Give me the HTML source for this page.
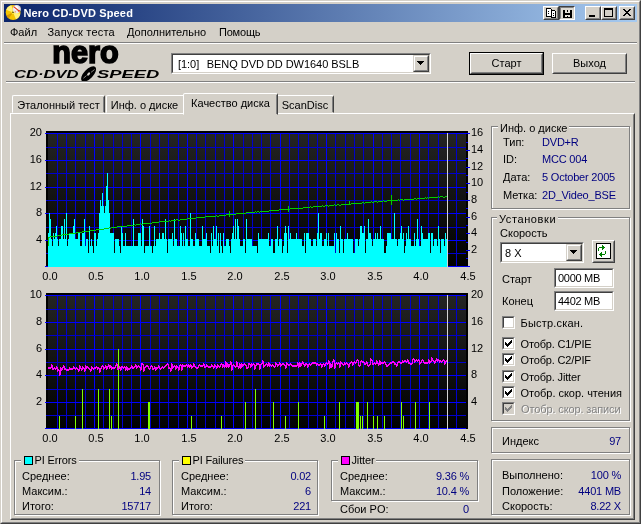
<!DOCTYPE html><html><head><meta charset="utf-8"><title>Nero CD-DVD Speed</title><style>
*{box-sizing:border-box;margin:0;padding:0}
html,body{width:641px;height:524px;overflow:hidden;background:#d4d0c8}
body{position:relative;font-family:"Liberation Sans",sans-serif;font-size:11px;color:#000;line-height:13px}
#w{position:absolute;left:0;top:0;width:641px;height:524px;will-change:transform}
.a{position:absolute;white-space:nowrap}
svg text{font-family:"Liberation Sans",sans-serif}
.frame{left:0;top:0;width:641px;height:524px;border:1px solid;border-color:#d4d0c8 #404040 #404040 #d4d0c8}
.frame2{left:1px;top:1px;width:639px;height:522px;border:1px solid;border-color:#fff #808080 #808080 #fff}
.title{left:4px;top:4px;width:633px;height:18px;background:linear-gradient(90deg,#0a246a,#a6caf0)}
.ttext{left:23.5px;top:6px;color:#fff;font-weight:bold;font-size:11px;line-height:14px;letter-spacing:0.15px}
.menu{top:26px;line-height:13px}
.sep{height:2px;border-top:1px solid #808080;border-bottom:1px solid #fff}
.btn{border:1px solid;border-color:#fff #404040 #404040 #fff;text-align:center}
.btn:after{content:"";position:absolute;left:0;top:0;right:0;bottom:0;border:1px solid;border-color:#d4d0c8 #808080 #808080 #d4d0c8}
.btn2{border:1px solid;border-color:#d4d0c8 #404040 #404040 #d4d0c8}
.btn2:after{content:"";position:absolute;left:0;top:0;right:0;bottom:0;border:1px solid;border-color:#fff #808080 #808080 #fff}
.sunk{border:1px solid;border-color:#808080 #fff #fff #808080;background:#fff}
.sunk:after{content:"";position:absolute;left:0;top:0;right:0;bottom:0;border:1px solid;border-color:#404040 #d4d0c8 #d4d0c8 #404040;pointer-events:none}
.grp{border:1px solid #808080;box-shadow:1px 1px 0 #fff, inset 1px 1px 0 #fff}
.leg{background:#d4d0c8;padding:0 2px}
.v{color:#000080;letter-spacing:-0.2px}
.r{text-align:right}
.tab{border:1px solid;border-color:#fff #404040 transparent #fff;border-radius:2px 2px 0 0}
.tab:after{content:"";position:absolute;right:0;top:1px;bottom:0;width:1px;background:#808080}
.cb{width:13px;height:13px}
</style></head><body><div id="w">
<div class="a frame" style=""></div>
<div class="a frame2" style=""></div>
<div class="a title" style=""></div>
<svg class="a" style="left:5px;top:4px" width="17" height="17" viewBox="5 4 17 17"><circle cx="13.1" cy="12.5" r="7.4" fill="#f4c400"/><path d="M13.1 12.5 L6.2 9.8 A7.4 7.4 0 0 1 11.5 5.3 Z" fill="#fff27a"/><path d="M13.1 12.5 L20.4 13.5 A7.4 7.4 0 0 1 16 19.3 Z" fill="#fff27a"/><path d="M13.1 12.5 L6.3 15.4 A7.4 7.4 0 0 0 8.6 18.4 Z" fill="#d89a00"/><circle cx="13" cy="12.4" r="1.5" fill="#f8e840"/><circle cx="13" cy="12.3" r="0.8" fill="#403000"/><circle cx="16.7" cy="9.1" r="4.2" fill="#e8e8ec"/><circle cx="16" cy="8" r="2" fill="#fff"/><path d="M13.6 6.6 L19.4 11.2" stroke="#e03818" stroke-width="1.1"/><circle cx="19" cy="10.8" r="0.9" fill="#e83010"/><path d="M15.3 11.2v1.2M19.3 6.8l0.6 0.6" stroke="#f07030" stroke-width="0.8"/></svg>
<div class="a ttext" style="">Nero CD-DVD Speed</div>
<div class="a btn" style="left:585px;top:6px;width:16px;height:14px;background:#d4d0c8"><div class="a" style="left:3px;top:8px;width:6px;height:2px;background:#000"></div></div>
<div class="a btn" style="left:601px;top:6px;width:16px;height:14px;background:#d4d0c8"><div class="a" style="left:2px;top:1px;width:9px;height:9px;border:1px solid #000;border-top-width:2px"></div></div>
<div class="a btn" style="left:619px;top:6px;width:16px;height:14px;background:#d4d0c8"><svg class="a" style="left:3px;top:2px" width="8" height="7" viewBox="0 0 8 7" shape-rendering="crispEdges"><path d="M0 0h2v1h1v1h2v-1h1v-1h2v1h-1v1h-1v1h-1v1h1v1h1v1h1v1h-2v-1h-1v-1h-2v1h-1v1h-2v-1h1v-1h1v-1h1v-1h-1v-1h-1v-1h-1z" fill="#000"/></svg></div>
<div class="a btn" style="left:543px;top:6px;width:16px;height:14px;background:#d4d0c8"><svg class="a" style="left:2px;top:1px" width="11" height="10" viewBox="0 0 11 10" shape-rendering="crispEdges"><path d="M0.5 0.5h4l1 1v6.5h-5z" fill="#fff" stroke="#000"/><path d="M5.5 2.5h3l1 1v6h-4z" fill="#fff" stroke="#000"/><path d="M2 3h1v1h-1zM2 5h1v1h-1zM7 5h1v1h-1zM7 7h1v1h-1z" fill="#000"/></svg></div>
<div class="a " style="left:559px;top:6px;width:16px;height:14px;background:#dedbd4;border:1px solid;border-color:#404040 #fff #fff #404040"><div class="a" style="left:0;top:0;right:0;bottom:0;border:1px solid;border-color:#808080 #d4d0c8 #d4d0c8 #808080"></div><svg class="a" style="left:3px;top:3px" width="9" height="8" viewBox="0 0 9 8" shape-rendering="crispEdges"><rect width="9" height="8" fill="#000"/><rect x="2" y="0" width="5" height="3" fill="#e8e4dc"/><rect x="4" y="0" width="1" height="2" fill="#000"/><rect x="2" y="5" width="5" height="3" fill="#e8e4dc"/><rect x="4" y="6" width="1" height="1" fill="#000"/><rect x="2" y="7" width="5" height="1" fill="#000"/></svg></div>
<div class="a menu" style="left:10px;letter-spacing:0px">Файл</div>
<div class="a menu" style="left:47.5px;letter-spacing:0.2px">Запуск теста</div>
<div class="a menu" style="left:127px;letter-spacing:0px">Дополнительно</div>
<div class="a menu" style="left:219px;letter-spacing:-0.2px">Помощь</div>
<div class="a sep" style="left:4px;top:42px;width:633px"></div>
<svg class="a" style="left:0;top:43px" width="170" height="40" viewBox="0 43 170 40"><text x="52.3" y="63" font-size="30.5" font-weight="bold" textLength="66.4" lengthAdjust="spacingAndGlyphs" stroke="#000" stroke-width="1.6" fill="#000">nero</text><text x="14" y="78" font-size="11.5" font-weight="bold" font-style="italic" textLength="64.5" lengthAdjust="spacingAndGlyphs">CD·DVD</text><text x="97" y="78" font-size="11.5" font-weight="bold" font-style="italic" textLength="62.3" lengthAdjust="spacingAndGlyphs">SPEED</text><g transform="rotate(-46 88.6 74)"><ellipse cx="88.6" cy="74" rx="9.6" ry="4.6" fill="#000"/><ellipse cx="88.6" cy="74" rx="1.9" ry="1.1" fill="#d4d0c8"/><path d="M82 73.2 L86 73.6 M91.5 74.6 L96 75.2" stroke="#b8b4ac" stroke-width="0.7"/></g></svg>
<div class="a sunk" style="left:171px;top:53px;width:260px;height:21px"><div class="a" style="left:6px;top:4px;letter-spacing:-0.04px">[1:0]<span style="display:inline-block;width:7.5px"></span>BENQ DVD DD DW1640 BSLB</div><div class="a btn2" style="right:1px;top:1px;width:16px;height:17px;background:#d4d0c8"><svg class="a" style="left:3px;top:5px" width="7" height="4" viewBox="0 0 7 4" shape-rendering="crispEdges"><path d="M0 0h7v1h-1v1h-1v1h-1v1h-1v-1h-1v-1h-1v-1h-1z" fill="#000"/></svg></div></div>
<div class="a " style="left:469px;top:52px;width:75px;height:23px;border:1px solid #000"><div class="a btn" style="left:0;top:0;width:73px;height:21px;line-height:19px">Старт</div></div>
<div class="a btn" style="left:552px;top:53px;width:75px;height:21px;line-height:19px">Выход</div>
<div class="a sep" style="left:6px;top:81px;width:629px"></div>
<div class="a " style="left:10px;top:113px;width:625px;height:407px;border:1px solid;border-color:#fff #404040 #404040 #fff"><div class="a" style="left:0;top:0;right:0;bottom:0;border:1px solid;border-color:#d4d0c8 #808080 #808080 #d4d0c8"></div></div>
<div class="a tab" style="left:12px;top:95px;width:93px;height:18px;text-align:center;line-height:19px;padding-right:0px">Эталонный тест</div>
<div class="a tab" style="left:106px;top:95px;width:79px;height:18px;text-align:center;line-height:19px;padding-right:2px">Инф. о диске</div>
<div class="a tab" style="left:276px;top:95px;width:58px;height:18px;text-align:center;line-height:19px;padding-right:0px">ScanDisc</div>
<div class="a tab" style="left:183px;top:93px;width:95px;height:22px;text-align:center;line-height:19px;background:#d4d0c8">Качество диска</div>
<svg width="641" height="524" viewBox="0 0 641 524" style="position:absolute;left:0;top:0" shape-rendering="crispEdges">
<defs><linearGradient id="pg" x1="0" y1="0" x2="0" y2="1"><stop offset="0" stop-color="#242424"/><stop offset="1" stop-color="#000"/></linearGradient></defs>
<rect x="46" y="131" width="422" height="136" fill="#000"/>
<rect x="48" y="133" width="418" height="134" fill="url(#pg)"/>
<rect x="57" y="133" width="1" height="134" fill="#0000cc"/>
<rect x="66" y="133" width="1" height="134" fill="#0000cc"/>
<rect x="75" y="133" width="1" height="134" fill="#0000cc"/>
<rect x="85" y="133" width="1" height="134" fill="#0000cc"/>
<rect x="94" y="133" width="1" height="134" fill="#0000ff"/>
<rect x="103" y="133" width="1" height="134" fill="#0000cc"/>
<rect x="113" y="133" width="1" height="134" fill="#0000cc"/>
<rect x="122" y="133" width="1" height="134" fill="#0000cc"/>
<rect x="131" y="133" width="1" height="134" fill="#0000cc"/>
<rect x="140" y="133" width="1" height="134" fill="#0000ff"/>
<rect x="150" y="133" width="1" height="134" fill="#0000cc"/>
<rect x="159" y="133" width="1" height="134" fill="#0000cc"/>
<rect x="168" y="133" width="1" height="134" fill="#0000cc"/>
<rect x="178" y="133" width="1" height="134" fill="#0000cc"/>
<rect x="187" y="133" width="1" height="134" fill="#0000ff"/>
<rect x="196" y="133" width="1" height="134" fill="#0000cc"/>
<rect x="205" y="133" width="1" height="134" fill="#0000cc"/>
<rect x="215" y="133" width="1" height="134" fill="#0000cc"/>
<rect x="224" y="133" width="1" height="134" fill="#0000cc"/>
<rect x="233" y="133" width="1" height="134" fill="#0000ff"/>
<rect x="243" y="133" width="1" height="134" fill="#0000cc"/>
<rect x="252" y="133" width="1" height="134" fill="#0000cc"/>
<rect x="261" y="133" width="1" height="134" fill="#0000cc"/>
<rect x="270" y="133" width="1" height="134" fill="#0000cc"/>
<rect x="280" y="133" width="1" height="134" fill="#0000ff"/>
<rect x="289" y="133" width="1" height="134" fill="#0000cc"/>
<rect x="298" y="133" width="1" height="134" fill="#0000cc"/>
<rect x="308" y="133" width="1" height="134" fill="#0000cc"/>
<rect x="317" y="133" width="1" height="134" fill="#0000cc"/>
<rect x="326" y="133" width="1" height="134" fill="#0000ff"/>
<rect x="335" y="133" width="1" height="134" fill="#0000cc"/>
<rect x="345" y="133" width="1" height="134" fill="#0000cc"/>
<rect x="354" y="133" width="1" height="134" fill="#0000cc"/>
<rect x="363" y="133" width="1" height="134" fill="#0000cc"/>
<rect x="373" y="133" width="1" height="134" fill="#0000ff"/>
<rect x="382" y="133" width="1" height="134" fill="#0000cc"/>
<rect x="391" y="133" width="1" height="134" fill="#0000cc"/>
<rect x="400" y="133" width="1" height="134" fill="#0000cc"/>
<rect x="410" y="133" width="1" height="134" fill="#0000cc"/>
<rect x="419" y="133" width="1" height="134" fill="#0000ff"/>
<rect x="428" y="133" width="1" height="134" fill="#0000cc"/>
<rect x="438" y="133" width="1" height="134" fill="#0000cc"/>
<rect x="447" y="133" width="1" height="134" fill="#0000cc"/>
<rect x="456" y="133" width="1" height="134" fill="#0000cc"/>
<rect x="45" y="133" width="421" height="1" fill="#0000ff"/>
<rect x="46" y="147" width="420" height="1" fill="#0000cc"/>
<rect x="45" y="160" width="421" height="1" fill="#0000ff"/>
<rect x="46" y="173" width="420" height="1" fill="#0000cc"/>
<rect x="45" y="187" width="421" height="1" fill="#0000ff"/>
<rect x="46" y="200" width="420" height="1" fill="#0000cc"/>
<rect x="45" y="213" width="421" height="1" fill="#0000ff"/>
<rect x="46" y="227" width="420" height="1" fill="#0000cc"/>
<rect x="45" y="240" width="421" height="1" fill="#0000ff"/>
<rect x="46" y="253" width="420" height="1" fill="#0000cc"/>
<rect x="45" y="266" width="421" height="1" fill="#0000ff"/>
<path d="M48,267V233h1V213h1V219h1V239h1V246h1V233h1V239h1V233h1V226h1V239h1V246h1V239h1V239h1V226h1V226h1V239h1V219h1V239h1V213h1V246h1V239h1V233h1V233h1V233h1V233h1V226h1V219h1V239h1V239h1V239h1V233h1V233h1V246h1V246h1V233h1V233h1V219h1V246h1V239h1V239h1V253h1V226h1V246h1V239h1V246h1V253h1V233h1V233h1V246h1V239h1V233h1V213h1V200h1V206h1V193h1V206h1V213h1V206h1V186h1V173h1V200h1V213h1V233h1V233h1V233h1V233h1V253h1V239h1V239h1V239h1V239h1V246h1V253h1V226h1V233h1V246h1V246h1V233h1V246h1V246h1V246h1V246h1V246h1V246h1V246h1V219h1V246h1V246h1V246h1V246h1V233h1V233h1V233h1V246h1V219h1V226h1V253h1V246h1V246h1V246h1V246h1V226h1V246h1V246h1V253h1V246h1V226h1V246h1V239h1V239h1V239h1V233h1V239h1V239h1V233h1V233h1V239h1V219h1V239h1V253h1V239h1V239h1V239h1V239h1V233h1V246h1V219h1V239h1V239h1V246h1V246h1V246h1V226h1V233h1V246h1V233h1V246h1V226h1V239h1V239h1V246h1V246h1V213h1V239h1V239h1V246h1V246h1V233h1V239h1V239h1V239h1V246h1V246h1V246h1V226h1V239h1V239h1V239h1V233h1V246h1V246h1V246h1V253h1V233h1V246h1V226h1V239h1V239h1V226h1V246h1V233h1V253h1V233h1V246h1V253h1V233h1V246h1V246h1V239h1V239h1V239h1V246h1V253h1V239h1V233h1V226h1V239h1V219h1V239h1V219h1V226h1V239h1V246h1V246h1V246h1V239h1V239h1V253h1V219h1V239h1V239h1V239h1V239h1V239h1V246h1V246h1V246h1V246h1V246h1V253h1V233h1V239h1V239h1V239h1V239h1V239h1V239h1V239h1V239h1V239h1V233h1V246h1V246h1V239h1V239h1V253h1V253h1V239h1V239h1V226h1V246h1V239h1V239h1V239h1V253h1V246h1V233h1V226h1V233h1V253h1V226h1V239h1V233h1V239h1V239h1V239h1V239h1V239h1V233h1V239h1V239h1V239h1V239h1V239h1V246h1V246h1V233h1V253h1V233h1V233h1V233h1V239h1V239h1V246h1V246h1V239h1V239h1V239h1V246h1V233h1V213h1V239h1V233h1V233h1V246h1V246h1V239h1V239h1V233h1V246h1V233h1V246h1V246h1V246h1V246h1V246h1V233h1V253h1V233h1V239h1V239h1V253h1V226h1V239h1V239h1V253h1V239h1V239h1V239h1V233h1V239h1V239h1V239h1V239h1V239h1V253h1V253h1V239h1V239h1V239h1V246h1V239h1V226h1V226h1V233h1V233h1V226h1V253h1V239h1V239h1V219h1V233h1V233h1V239h1V246h1V239h1V239h1V233h1V239h1V233h1V239h1V239h1V226h1V239h1V239h1V239h1V253h1V253h1V246h1V233h1V233h1V233h1V233h1V239h1V239h1V239h1V213h1V239h1V239h1V246h1V239h1V239h1V233h1V226h1V239h1V233h1V253h1V246h1V233h1V239h1V226h1V239h1V239h1V246h1V246h1V246h1V233h1V246h1V239h1V219h1V239h1V246h1V246h1V226h1V233h1V239h1V239h1V239h1V239h1V239h1V233h1V233h1V253h1V233h1V233h1V246h1V239h1V239h1V239h1V246h1V226h1V239h1V253h1V239h1V239h1V239h1V246h1V233h1V239h1V267Z" fill="#00ffff"/>
<path d="M49,237h1v1h-1zM50,236h1v1h-1zM51,236h1v1h-1zM52,236h1v1h-1zM53,236h1v1h-1zM54,236h1v1h-1zM55,236h1v1h-1zM56,236h1v1h-1zM57,235h1v1h-1zM58,235h1v1h-1zM59,235h1v1h-1zM60,235h1v1h-1zM61,235h1v1h-1zM62,234h1v1h-1zM63,234h1v1h-1zM64,234h1v1h-1zM65,234h1v1h-1zM66,234h1v1h-1zM67,234h1v1h-1zM68,234h1v1h-1zM69,233h1v1h-1zM70,233h1v1h-1zM71,233h1v1h-1zM72,233h1v1h-1zM73,233h1v1h-1zM74,233h1v1h-1zM75,233h1v1h-1zM76,232h1v1h-1zM77,232h1v1h-1zM78,232h1v1h-1zM79,232h1v1h-1zM80,232h1v1h-1zM81,232h1v1h-1zM82,231h1v1h-1zM83,231h1v1h-1zM84,231h1v1h-1zM85,231h1v1h-1zM86,231h1v1h-1zM87,231h1v1h-1zM88,231h1v1h-1zM89,230h1v1h-1zM90,230h1v1h-1zM91,230h1v1h-1zM92,230h1v1h-1zM93,230h1v1h-1zM94,230h1v1h-1zM95,230h1v1h-1zM96,229h1v1h-1zM97,229h1v1h-1zM98,229h1v1h-1zM99,229h1v1h-1zM100,229h1v1h-1zM101,229h1v1h-1zM102,229h1v1h-1zM103,229h1v1h-1zM104,228h1v1h-1zM105,228h1v1h-1zM106,228h1v1h-1zM107,228h1v1h-1zM108,228h1v1h-1zM109,227h1v1h-1zM110,228h1v1h-1zM111,227h1v1h-1zM112,227h1v1h-1zM113,227h1v1h-1zM114,227h1v1h-1zM115,227h1v1h-1zM116,227h1v1h-1zM117,226h1v1h-1zM118,226h1v1h-1zM119,226h1v1h-1zM120,226h1v1h-1zM121,226h1v1h-1zM122,226h1v1h-1zM123,226h1v1h-1zM124,226h1v1h-1zM125,226h1v1h-1zM126,226h1v1h-1zM127,225h1v1h-1zM128,225h1v1h-1zM129,225h1v1h-1zM130,225h1v1h-1zM131,225h1v1h-1zM132,225h1v1h-1zM133,225h1v1h-1zM134,224h1v1h-1zM135,225h1v1h-1zM136,224h1v1h-1zM137,224h1v1h-1zM138,224h1v1h-1zM139,224h1v1h-1zM140,223h1v1h-1zM141,224h1v1h-1zM142,224h1v1h-1zM143,223h1v1h-1zM144,223h1v1h-1zM145,223h1v1h-1zM146,223h1v1h-1zM147,223h1v1h-1zM148,223h1v1h-1zM149,223h1v1h-1zM150,223h1v1h-1zM151,223h1v1h-1zM152,222h1v1h-1zM153,222h1v1h-1zM154,222h1v1h-1zM155,222h1v1h-1zM156,222h1v1h-1zM157,222h1v1h-1zM158,222h1v1h-1zM159,221h1v1h-1zM160,221h1v1h-1zM161,221h1v1h-1zM162,221h1v1h-1zM163,221h1v1h-1zM164,221h1v1h-1zM165,221h1v1h-1zM166,221h1v1h-1zM167,221h1v1h-1zM168,221h1v1h-1zM169,220h1v1h-1zM170,221h1v1h-1zM171,220h1v1h-1zM172,220h1v1h-1zM173,220h1v1h-1zM174,220h1v1h-1zM175,220h1v1h-1zM176,219h1v1h-1zM177,219h1v1h-1zM178,220h1v1h-1zM179,220h1v1h-1zM180,219h1v1h-1zM181,219h1v1h-1zM182,219h1v1h-1zM183,219h1v1h-1zM184,219h1v1h-1zM185,219h1v1h-1zM186,219h1v1h-1zM187,218h1v1h-1zM188,218h1v1h-1zM189,218h1v1h-1zM190,218h1v1h-1zM191,218h1v1h-1zM192,218h1v1h-1zM193,218h1v1h-1zM194,218h1v1h-1zM195,218h1v1h-1zM196,217h1v1h-1zM197,217h1v1h-1zM198,217h1v1h-1zM199,217h1v1h-1zM200,217h1v1h-1zM201,217h1v1h-1zM202,217h1v1h-1zM203,217h1v1h-1zM204,217h1v1h-1zM205,216h1v1h-1zM206,216h1v1h-1zM207,216h1v1h-1zM208,216h1v1h-1zM209,216h1v1h-1zM210,216h1v1h-1zM211,216h1v1h-1zM212,216h1v1h-1zM213,216h1v1h-1zM214,216h1v1h-1zM215,216h1v1h-1zM216,215h1v1h-1zM217,216h1v1h-1zM218,216h1v1h-1zM219,215h1v1h-1zM220,215h1v1h-1zM221,215h1v1h-1zM222,215h1v1h-1zM223,215h1v1h-1zM224,215h1v1h-1zM225,215h1v1h-1zM226,214h1v1h-1zM227,214h1v1h-1zM228,214h1v1h-1zM229,214h1v1h-1zM230,214h1v1h-1zM231,214h1v1h-1zM232,214h1v1h-1zM233,214h1v1h-1zM234,214h1v1h-1zM235,214h1v1h-1zM236,213h1v1h-1zM237,213h1v1h-1zM238,213h1v1h-1zM239,213h1v1h-1zM240,213h1v1h-1zM241,213h1v1h-1zM242,213h1v1h-1zM243,213h1v1h-1zM244,213h1v1h-1zM245,213h1v1h-1zM246,212h1v1h-1zM247,212h1v1h-1zM248,212h1v1h-1zM249,212h1v1h-1zM250,212h1v1h-1zM251,212h1v1h-1zM252,212h1v1h-1zM253,212h1v1h-1zM254,212h1v1h-1zM255,211h1v1h-1zM256,212h1v1h-1zM257,211h1v1h-1zM258,211h1v1h-1zM259,212h1v1h-1zM260,211h1v1h-1zM261,211h1v1h-1zM262,211h1v1h-1zM263,211h1v1h-1zM264,211h1v1h-1zM265,211h1v1h-1zM266,211h1v1h-1zM267,211h1v1h-1zM268,211h1v1h-1zM269,210h1v1h-1zM270,210h1v1h-1zM271,210h1v1h-1zM272,210h1v1h-1zM273,210h1v1h-1zM274,210h1v1h-1zM275,210h1v1h-1zM276,210h1v1h-1zM277,210h1v1h-1zM278,210h1v1h-1zM279,209h1v1h-1zM280,209h1v1h-1zM281,209h1v1h-1zM282,209h1v1h-1zM283,209h1v1h-1zM284,209h1v1h-1zM285,209h1v1h-1zM286,209h1v1h-1zM287,209h1v1h-1zM288,208h1v1h-1zM289,209h1v1h-1zM290,208h1v1h-1zM291,208h1v1h-1zM292,208h1v1h-1zM293,208h1v1h-1zM294,208h1v1h-1zM295,208h1v1h-1zM296,208h1v1h-1zM297,208h1v1h-1zM298,208h1v1h-1zM299,208h1v1h-1zM300,208h1v1h-1zM301,208h1v1h-1zM302,208h1v1h-1zM303,207h1v1h-1zM304,207h1v1h-1zM305,207h1v1h-1zM306,207h1v1h-1zM307,207h1v1h-1zM308,207h1v1h-1zM309,207h1v1h-1zM310,206h1v1h-1zM311,207h1v1h-1zM312,207h1v1h-1zM313,206h1v1h-1zM314,206h1v1h-1zM315,206h1v1h-1zM316,206h1v1h-1zM317,206h1v1h-1zM318,206h1v1h-1zM319,206h1v1h-1zM320,206h1v1h-1zM321,206h1v1h-1zM322,205h1v1h-1zM323,206h1v1h-1zM324,206h1v1h-1zM325,205h1v1h-1zM326,205h1v1h-1zM327,205h1v1h-1zM328,206h1v1h-1zM329,205h1v1h-1zM330,205h1v1h-1zM331,205h1v1h-1zM332,205h1v1h-1zM333,205h1v1h-1zM334,204h1v1h-1zM335,205h1v1h-1zM336,205h1v1h-1zM337,204h1v1h-1zM338,204h1v1h-1zM339,205h1v1h-1zM340,205h1v1h-1zM341,204h1v1h-1zM342,204h1v1h-1zM343,204h1v1h-1zM344,204h1v1h-1zM345,204h1v1h-1zM346,204h1v1h-1zM347,204h1v1h-1zM348,204h1v1h-1zM349,203h1v1h-1zM350,204h1v1h-1zM351,203h1v1h-1zM352,203h1v1h-1zM353,203h1v1h-1zM354,203h1v1h-1zM355,203h1v1h-1zM356,203h1v1h-1zM357,203h1v1h-1zM358,203h1v1h-1zM359,203h1v1h-1zM360,203h1v1h-1zM361,203h1v1h-1zM362,202h1v1h-1zM363,202h1v1h-1zM364,203h1v1h-1zM365,202h1v1h-1zM366,202h1v1h-1zM367,202h1v1h-1zM368,202h1v1h-1zM369,202h1v1h-1zM370,202h1v1h-1zM371,201h1v1h-1zM372,202h1v1h-1zM373,202h1v1h-1zM374,201h1v1h-1zM375,201h1v1h-1zM376,201h1v1h-1zM377,202h1v1h-1zM378,201h1v1h-1zM379,201h1v1h-1zM380,201h1v1h-1zM381,201h1v1h-1zM382,201h1v1h-1zM383,200h1v1h-1zM384,201h1v1h-1zM385,201h1v1h-1zM386,201h1v1h-1zM387,200h1v1h-1zM388,200h1v1h-1zM389,200h1v1h-1zM390,200h1v1h-1zM391,200h1v1h-1zM392,200h1v1h-1zM393,200h1v1h-1zM394,200h1v1h-1zM395,200h1v1h-1zM396,200h1v1h-1zM397,200h1v1h-1zM398,199h1v1h-1zM399,200h1v1h-1zM400,199h1v1h-1zM401,199h1v1h-1zM402,199h1v1h-1zM403,200h1v1h-1zM404,199h1v1h-1zM405,199h1v1h-1zM406,199h1v1h-1zM407,199h1v1h-1zM408,199h1v1h-1zM409,199h1v1h-1zM410,199h1v1h-1zM411,199h1v1h-1zM412,199h1v1h-1zM413,199h1v1h-1zM414,198h1v1h-1zM415,198h1v1h-1zM416,199h1v1h-1zM417,198h1v1h-1zM418,198h1v1h-1zM419,198h1v1h-1zM420,198h1v1h-1zM421,198h1v1h-1zM422,198h1v1h-1zM423,198h1v1h-1zM424,198h1v1h-1zM425,197h1v1h-1zM426,198h1v1h-1zM427,197h1v1h-1zM428,198h1v1h-1zM429,197h1v1h-1zM430,197h1v1h-1zM431,197h1v1h-1zM432,197h1v1h-1zM433,197h1v1h-1zM434,197h1v1h-1zM435,197h1v1h-1zM436,197h1v1h-1zM437,197h1v1h-1zM438,196h1v1h-1zM439,197h1v1h-1zM440,196h1v1h-1zM441,196h1v1h-1zM442,196h1v1h-1zM443,197h1v1h-1zM444,197h1v1h-1zM445,196h1v1h-1zM446,196h1v1h-1z" fill="#00d000"/>
<rect x="48" y="237" width="1" height="9" fill="#00d000"/>
<rect x="229" y="211" width="1" height="6" fill="#00d000"/>
<rect x="288" y="206" width="1" height="6" fill="#00d000"/>
<rect x="349" y="201" width="1" height="4" fill="#00d000"/>
<rect x="391" y="195" width="1" height="10" fill="#00d000"/>
<rect x="447" y="133" width="1" height="134" fill="#d4d4d4"/>
<rect x="466" y="133" width="4" height="1" fill="#0000ff"/>
<rect x="466" y="142" width="2" height="1" fill="#0000ff"/>
<rect x="466" y="150" width="4" height="1" fill="#0000ff"/>
<rect x="466" y="158" width="2" height="1" fill="#0000ff"/>
<rect x="466" y="167" width="4" height="1" fill="#0000ff"/>
<rect x="466" y="175" width="2" height="1" fill="#0000ff"/>
<rect x="466" y="183" width="4" height="1" fill="#0000ff"/>
<rect x="466" y="192" width="2" height="1" fill="#0000ff"/>
<rect x="466" y="200" width="4" height="1" fill="#0000ff"/>
<rect x="466" y="208" width="2" height="1" fill="#0000ff"/>
<rect x="466" y="217" width="4" height="1" fill="#0000ff"/>
<rect x="466" y="225" width="2" height="1" fill="#0000ff"/>
<rect x="466" y="233" width="4" height="1" fill="#0000ff"/>
<rect x="466" y="242" width="2" height="1" fill="#0000ff"/>
<rect x="466" y="250" width="4" height="1" fill="#0000ff"/>
<rect x="466" y="258" width="2" height="1" fill="#0000ff"/>
<rect x="466" y="266" width="4" height="1" fill="#0000ff"/>
<rect x="46" y="293" width="422" height="136" fill="#000"/>
<rect x="48" y="295" width="418" height="134" fill="url(#pg)"/>
<rect x="57" y="295" width="1" height="134" fill="#0000cc"/>
<rect x="66" y="295" width="1" height="134" fill="#0000cc"/>
<rect x="75" y="295" width="1" height="134" fill="#0000cc"/>
<rect x="85" y="295" width="1" height="134" fill="#0000cc"/>
<rect x="94" y="295" width="1" height="134" fill="#0000ff"/>
<rect x="103" y="295" width="1" height="134" fill="#0000cc"/>
<rect x="113" y="295" width="1" height="134" fill="#0000cc"/>
<rect x="122" y="295" width="1" height="134" fill="#0000cc"/>
<rect x="131" y="295" width="1" height="134" fill="#0000cc"/>
<rect x="140" y="295" width="1" height="134" fill="#0000ff"/>
<rect x="150" y="295" width="1" height="134" fill="#0000cc"/>
<rect x="159" y="295" width="1" height="134" fill="#0000cc"/>
<rect x="168" y="295" width="1" height="134" fill="#0000cc"/>
<rect x="178" y="295" width="1" height="134" fill="#0000cc"/>
<rect x="187" y="295" width="1" height="134" fill="#0000ff"/>
<rect x="196" y="295" width="1" height="134" fill="#0000cc"/>
<rect x="205" y="295" width="1" height="134" fill="#0000cc"/>
<rect x="215" y="295" width="1" height="134" fill="#0000cc"/>
<rect x="224" y="295" width="1" height="134" fill="#0000cc"/>
<rect x="233" y="295" width="1" height="134" fill="#0000ff"/>
<rect x="243" y="295" width="1" height="134" fill="#0000cc"/>
<rect x="252" y="295" width="1" height="134" fill="#0000cc"/>
<rect x="261" y="295" width="1" height="134" fill="#0000cc"/>
<rect x="270" y="295" width="1" height="134" fill="#0000cc"/>
<rect x="280" y="295" width="1" height="134" fill="#0000ff"/>
<rect x="289" y="295" width="1" height="134" fill="#0000cc"/>
<rect x="298" y="295" width="1" height="134" fill="#0000cc"/>
<rect x="308" y="295" width="1" height="134" fill="#0000cc"/>
<rect x="317" y="295" width="1" height="134" fill="#0000cc"/>
<rect x="326" y="295" width="1" height="134" fill="#0000ff"/>
<rect x="335" y="295" width="1" height="134" fill="#0000cc"/>
<rect x="345" y="295" width="1" height="134" fill="#0000cc"/>
<rect x="354" y="295" width="1" height="134" fill="#0000cc"/>
<rect x="363" y="295" width="1" height="134" fill="#0000cc"/>
<rect x="373" y="295" width="1" height="134" fill="#0000ff"/>
<rect x="382" y="295" width="1" height="134" fill="#0000cc"/>
<rect x="391" y="295" width="1" height="134" fill="#0000cc"/>
<rect x="400" y="295" width="1" height="134" fill="#0000cc"/>
<rect x="410" y="295" width="1" height="134" fill="#0000cc"/>
<rect x="419" y="295" width="1" height="134" fill="#0000ff"/>
<rect x="428" y="295" width="1" height="134" fill="#0000cc"/>
<rect x="438" y="295" width="1" height="134" fill="#0000cc"/>
<rect x="447" y="295" width="1" height="134" fill="#0000cc"/>
<rect x="456" y="295" width="1" height="134" fill="#0000cc"/>
<rect x="45" y="295" width="421" height="1" fill="#0000ff"/>
<rect x="46" y="309" width="420" height="1" fill="#0000cc"/>
<rect x="45" y="322" width="421" height="1" fill="#0000ff"/>
<rect x="46" y="335" width="420" height="1" fill="#0000cc"/>
<rect x="45" y="349" width="421" height="1" fill="#0000ff"/>
<rect x="46" y="362" width="420" height="1" fill="#0000cc"/>
<rect x="45" y="375" width="421" height="1" fill="#0000ff"/>
<rect x="46" y="389" width="420" height="1" fill="#0000cc"/>
<rect x="45" y="402" width="421" height="1" fill="#0000ff"/>
<rect x="46" y="415" width="420" height="1" fill="#0000cc"/>
<rect x="45" y="428" width="421" height="1" fill="#0000ff"/>
<rect x="59" y="416" width="1" height="13" fill="#80ff00"/>
<rect x="75" y="416" width="1" height="13" fill="#80ff00"/>
<rect x="82" y="389" width="1" height="40" fill="#80ff00"/>
<rect x="98" y="389" width="1" height="40" fill="#80ff00"/>
<rect x="109" y="389" width="1" height="40" fill="#80ff00"/>
<rect x="111" y="416" width="1" height="13" fill="#80ff00"/>
<rect x="118" y="349" width="1" height="80" fill="#80ff00"/>
<rect x="148" y="402" width="1" height="27" fill="#80ff00"/>
<rect x="149" y="402" width="1" height="27" fill="#80ff00"/>
<rect x="191" y="416" width="1" height="13" fill="#80ff00"/>
<rect x="221" y="416" width="1" height="13" fill="#80ff00"/>
<rect x="245" y="402" width="1" height="27" fill="#80ff00"/>
<rect x="255" y="389" width="1" height="40" fill="#80ff00"/>
<rect x="273" y="402" width="1" height="27" fill="#80ff00"/>
<rect x="285" y="416" width="1" height="13" fill="#80ff00"/>
<rect x="298" y="402" width="1" height="27" fill="#80ff00"/>
<rect x="324" y="416" width="1" height="13" fill="#80ff00"/>
<rect x="339" y="402" width="1" height="27" fill="#80ff00"/>
<rect x="356" y="402" width="1" height="27" fill="#80ff00"/>
<rect x="357" y="402" width="1" height="27" fill="#80ff00"/>
<rect x="358" y="402" width="1" height="27" fill="#80ff00"/>
<rect x="360" y="416" width="1" height="13" fill="#80ff00"/>
<rect x="362" y="416" width="1" height="13" fill="#80ff00"/>
<rect x="367" y="402" width="1" height="27" fill="#80ff00"/>
<rect x="373" y="416" width="1" height="13" fill="#80ff00"/>
<rect x="377" y="416" width="1" height="13" fill="#80ff00"/>
<rect x="384" y="416" width="1" height="13" fill="#80ff00"/>
<rect x="401" y="402" width="1" height="27" fill="#80ff00"/>
<rect x="403" y="416" width="1" height="13" fill="#80ff00"/>
<rect x="415" y="402" width="1" height="27" fill="#80ff00"/>
<rect x="429" y="402" width="1" height="27" fill="#80ff00"/>
<path d="M48,367h1v1h-1zM49,367h1v1h-1zM50,367h1v1h-1zM51,364h1v3h-1zM52,365h1v4h-1zM53,368h1v1h-1zM54,367h1v1h-1zM55,368h1v1h-1zM56,366h1v2h-1zM57,367h1v4h-1zM58,369h1v1h-1zM59,370h1v5h-1zM60,367h1v7h-1zM61,368h1v2h-1zM62,367h1v2h-1zM63,365h1v2h-1zM64,366h1v3h-1zM65,368h1v1h-1zM66,369h1v1h-1zM67,369h1v1h-1zM68,369h1v1h-1zM69,367h1v2h-1zM70,368h1v1h-1zM71,368h1v1h-1zM72,368h1v1h-1zM73,366h1v2h-1zM74,367h1v1h-1zM75,368h1v1h-1zM76,367h1v1h-1zM77,368h1v1h-1zM78,369h1v2h-1zM79,365h1v5h-1zM80,366h1v2h-1zM81,368h1v2h-1zM82,366h1v3h-1zM83,367h1v1h-1zM84,368h1v3h-1zM85,365h1v5h-1zM86,366h1v2h-1zM87,366h1v1h-1zM88,367h1v1h-1zM89,368h1v1h-1zM90,369h1v2h-1zM91,366h1v4h-1zM92,367h1v1h-1zM93,368h1v1h-1zM94,367h1v1h-1zM95,367h1v1h-1zM96,366h1v1h-1zM97,367h1v2h-1zM98,367h1v1h-1zM99,368h1v4h-1zM100,368h1v3h-1zM101,366h1v2h-1zM102,365h1v1h-1zM103,366h1v3h-1zM104,367h1v1h-1zM105,365h1v2h-1zM106,366h1v3h-1zM107,366h1v2h-1zM108,364h1v2h-1zM109,365h1v3h-1zM110,365h1v2h-1zM111,366h1v3h-1zM112,367h1v1h-1zM113,367h1v1h-1zM114,367h1v1h-1zM115,365h1v2h-1zM116,363h1v2h-1zM117,364h1v5h-1zM118,368h1v1h-1zM119,366h1v2h-1zM120,367h1v3h-1zM121,366h1v3h-1zM122,366h1v1h-1zM123,367h1v1h-1zM124,366h1v1h-1zM125,367h1v3h-1zM126,366h1v3h-1zM127,367h1v3h-1zM128,368h1v1h-1zM129,368h1v1h-1zM130,367h1v1h-1zM131,365h1v2h-1zM132,366h1v2h-1zM133,367h1v1h-1zM134,366h1v1h-1zM135,364h1v2h-1zM136,365h1v3h-1zM137,366h1v1h-1zM138,365h1v1h-1zM139,366h1v1h-1zM140,367h1v3h-1zM141,363h1v6h-1zM142,363h1v1h-1zM143,364h1v7h-1zM144,367h1v3h-1zM145,366h1v1h-1zM146,365h1v1h-1zM147,365h1v1h-1zM148,366h1v2h-1zM149,368h1v1h-1zM150,366h1v2h-1zM151,365h1v1h-1zM152,366h1v3h-1zM153,368h1v1h-1zM154,366h1v2h-1zM155,367h1v3h-1zM156,367h1v2h-1zM157,367h1v1h-1zM158,365h1v2h-1zM159,366h1v2h-1zM160,368h1v1h-1zM161,367h1v1h-1zM162,366h1v1h-1zM163,367h1v1h-1zM164,366h1v1h-1zM165,365h1v1h-1zM166,364h1v1h-1zM167,363h1v1h-1zM168,364h1v4h-1zM169,367h1v1h-1zM170,368h1v3h-1zM171,363h1v7h-1zM172,364h1v4h-1zM173,366h1v1h-1zM174,365h1v1h-1zM175,366h1v3h-1zM176,365h1v3h-1zM177,366h1v1h-1zM178,367h1v3h-1zM179,365h1v4h-1zM180,364h1v1h-1zM181,365h1v5h-1zM182,364h1v5h-1zM183,365h1v1h-1zM184,365h1v1h-1zM185,365h1v1h-1zM186,364h1v1h-1zM187,365h1v2h-1zM188,364h1v2h-1zM189,365h1v2h-1zM190,364h1v2h-1zM191,365h1v3h-1zM192,366h1v1h-1zM193,363h1v3h-1zM194,364h1v2h-1zM195,366h1v1h-1zM196,367h1v1h-1zM197,367h1v1h-1zM198,365h1v2h-1zM199,364h1v1h-1zM200,365h1v1h-1zM201,365h1v1h-1zM202,365h1v1h-1zM203,363h1v2h-1zM204,364h1v3h-1zM205,366h1v1h-1zM206,364h1v2h-1zM207,365h1v1h-1zM208,366h1v1h-1zM209,366h1v1h-1zM210,366h1v1h-1zM211,364h1v2h-1zM212,365h1v1h-1zM213,366h1v2h-1zM214,364h1v3h-1zM215,365h1v1h-1zM216,366h1v2h-1zM217,364h1v3h-1zM218,365h1v1h-1zM219,366h1v1h-1zM220,364h1v2h-1zM221,363h1v1h-1zM222,364h1v3h-1zM223,364h1v2h-1zM224,365h1v2h-1zM225,361h1v5h-1zM226,362h1v5h-1zM227,363h1v3h-1zM228,364h1v3h-1zM229,364h1v2h-1zM230,361h1v3h-1zM231,362h1v8h-1zM232,365h1v4h-1zM233,364h1v1h-1zM234,365h1v1h-1zM235,366h1v1h-1zM236,361h1v5h-1zM237,362h1v4h-1zM238,366h1v2h-1zM239,363h1v4h-1zM240,364h1v4h-1zM241,363h1v4h-1zM242,364h1v2h-1zM243,364h1v1h-1zM244,363h1v1h-1zM245,364h1v1h-1zM246,365h1v3h-1zM247,367h1v1h-1zM248,363h1v4h-1zM249,363h1v1h-1zM250,364h1v3h-1zM251,363h1v3h-1zM252,364h1v1h-1zM253,363h1v1h-1zM254,364h1v5h-1zM255,365h1v3h-1zM256,363h1v2h-1zM257,363h1v1h-1zM258,363h1v1h-1zM259,364h1v5h-1zM260,364h1v4h-1zM261,363h1v1h-1zM262,360h1v3h-1zM263,361h1v6h-1zM264,365h1v1h-1zM265,364h1v1h-1zM266,363h1v1h-1zM267,364h1v2h-1zM268,362h1v3h-1zM269,363h1v3h-1zM270,364h1v1h-1zM271,365h1v1h-1zM272,364h1v1h-1zM273,365h1v1h-1zM274,366h1v1h-1zM275,362h1v4h-1zM276,363h1v1h-1zM277,364h1v2h-1zM278,364h1v1h-1zM279,362h1v2h-1zM280,363h1v3h-1zM281,364h1v1h-1zM282,363h1v1h-1zM283,363h1v1h-1zM284,364h1v1h-1zM285,365h1v3h-1zM286,362h1v5h-1zM287,363h1v1h-1zM288,364h1v1h-1zM289,364h1v1h-1zM290,363h1v1h-1zM291,364h1v1h-1zM292,365h1v1h-1zM293,365h1v1h-1zM294,365h1v1h-1zM295,365h1v1h-1zM296,365h1v1h-1zM297,362h1v3h-1zM298,363h1v4h-1zM299,362h1v4h-1zM300,363h1v3h-1zM301,363h1v2h-1zM302,361h1v2h-1zM303,362h1v2h-1zM304,364h1v2h-1zM305,363h1v2h-1zM306,363h1v1h-1zM307,364h1v3h-1zM308,364h1v2h-1zM309,363h1v1h-1zM310,364h1v1h-1zM311,363h1v1h-1zM312,362h1v1h-1zM313,362h1v1h-1zM314,362h1v1h-1zM315,362h1v1h-1zM316,363h1v2h-1zM317,363h1v1h-1zM318,364h1v1h-1zM319,364h1v1h-1zM320,363h1v1h-1zM321,364h1v3h-1zM322,364h1v2h-1zM323,363h1v1h-1zM324,364h1v2h-1zM325,363h1v2h-1zM326,362h1v1h-1zM327,363h1v1h-1zM328,360h1v3h-1zM329,361h1v7h-1zM330,363h1v4h-1zM331,364h1v3h-1zM332,361h1v5h-1zM333,359h1v2h-1zM334,360h1v8h-1zM335,363h1v4h-1zM336,362h1v1h-1zM337,363h1v1h-1zM338,362h1v1h-1zM339,363h1v4h-1zM340,361h1v5h-1zM341,362h1v1h-1zM342,363h1v1h-1zM343,364h1v1h-1zM344,362h1v2h-1zM345,363h1v1h-1zM346,362h1v1h-1zM347,363h1v1h-1zM348,364h1v3h-1zM349,363h1v3h-1zM350,362h1v1h-1zM351,361h1v1h-1zM352,362h1v3h-1zM353,362h1v2h-1zM354,361h1v1h-1zM355,362h1v1h-1zM356,360h1v2h-1zM357,359h1v1h-1zM358,360h1v5h-1zM359,365h1v1h-1zM360,361h1v4h-1zM361,360h1v1h-1zM362,361h1v1h-1zM363,361h1v1h-1zM364,362h1v2h-1zM365,363h1v1h-1zM366,361h1v2h-1zM367,362h1v3h-1zM368,365h1v1h-1zM369,364h1v1h-1zM370,358h1v6h-1zM371,359h1v1h-1zM372,360h1v4h-1zM373,363h1v1h-1zM374,362h1v1h-1zM375,363h1v1h-1zM376,360h1v3h-1zM377,361h1v2h-1zM378,363h1v2h-1zM379,360h1v4h-1zM380,361h1v3h-1zM381,362h1v1h-1zM382,362h1v1h-1zM383,362h1v1h-1zM384,361h1v1h-1zM385,362h1v2h-1zM386,364h1v2h-1zM387,365h1v1h-1zM388,364h1v1h-1zM389,363h1v1h-1zM390,362h1v1h-1zM391,362h1v1h-1zM392,361h1v1h-1zM393,361h1v1h-1zM394,362h1v2h-1zM395,363h1v1h-1zM396,364h1v2h-1zM397,362h1v3h-1zM398,361h1v1h-1zM399,361h1v1h-1zM400,362h1v1h-1zM401,362h1v1h-1zM402,360h1v2h-1zM403,361h1v1h-1zM404,360h1v1h-1zM405,360h1v1h-1zM406,361h1v1h-1zM407,359h1v2h-1zM408,360h1v3h-1zM409,362h1v1h-1zM410,363h1v1h-1zM411,363h1v1h-1zM412,359h1v4h-1zM413,358h1v1h-1zM414,359h1v3h-1zM415,360h1v1h-1zM416,359h1v1h-1zM417,360h1v1h-1zM418,359h1v1h-1zM419,360h1v4h-1zM420,362h1v1h-1zM421,360h1v2h-1zM422,359h1v1h-1zM423,360h1v2h-1zM424,362h1v1h-1zM425,362h1v1h-1zM426,362h1v1h-1zM427,362h1v1h-1zM428,359h1v3h-1zM429,360h1v3h-1zM430,361h1v1h-1zM431,357h1v4h-1zM432,358h1v2h-1zM433,360h1v1h-1zM434,361h1v2h-1zM435,360h1v2h-1zM436,358h1v2h-1zM437,359h1v2h-1zM438,359h1v1h-1zM439,360h1v2h-1zM440,360h1v1h-1zM441,361h1v1h-1zM442,360h1v1h-1zM443,359h1v1h-1zM444,360h1v4h-1zM445,361h1v2h-1zM446,360h1v1h-1z" fill="#ff00ff"/>
<path d="M48,368h1v1h-1zM49,368h1v1h-1zM50,368h1v1h-1zM51,365h1v3h-1zM52,366h1v4h-1zM53,369h1v1h-1zM54,368h1v1h-1zM55,369h1v1h-1zM56,367h1v2h-1zM57,368h1v4h-1zM58,370h1v1h-1zM59,371h1v5h-1zM60,368h1v7h-1zM61,369h1v2h-1zM62,368h1v2h-1zM63,366h1v2h-1zM64,367h1v3h-1zM65,369h1v1h-1zM66,370h1v1h-1zM67,370h1v1h-1zM68,370h1v1h-1zM69,368h1v2h-1zM70,369h1v1h-1zM71,369h1v1h-1zM72,369h1v1h-1zM73,367h1v2h-1zM74,368h1v1h-1zM75,369h1v1h-1zM76,368h1v1h-1zM77,369h1v1h-1zM78,370h1v2h-1zM79,366h1v5h-1zM80,367h1v2h-1zM81,369h1v2h-1zM82,367h1v3h-1zM83,368h1v1h-1zM84,369h1v3h-1zM85,366h1v5h-1zM86,367h1v2h-1zM87,367h1v1h-1zM88,368h1v1h-1zM89,369h1v1h-1zM90,370h1v2h-1zM91,367h1v4h-1zM92,368h1v1h-1zM93,369h1v1h-1zM94,368h1v1h-1zM95,368h1v1h-1zM96,367h1v1h-1zM97,368h1v2h-1zM98,368h1v1h-1zM99,369h1v4h-1zM100,369h1v3h-1zM101,367h1v2h-1zM102,366h1v1h-1zM103,367h1v3h-1zM104,368h1v1h-1zM105,366h1v2h-1zM106,367h1v3h-1zM107,367h1v2h-1zM108,365h1v2h-1zM109,366h1v3h-1zM110,366h1v2h-1zM111,367h1v3h-1zM112,368h1v1h-1zM113,368h1v1h-1zM114,368h1v1h-1zM115,366h1v2h-1zM116,364h1v2h-1zM117,365h1v5h-1zM118,369h1v1h-1zM119,367h1v2h-1zM120,368h1v3h-1zM121,367h1v3h-1zM122,367h1v1h-1zM123,368h1v1h-1zM124,367h1v1h-1zM125,368h1v3h-1zM126,367h1v3h-1zM127,368h1v3h-1zM128,369h1v1h-1zM129,369h1v1h-1zM130,368h1v1h-1zM131,366h1v2h-1zM132,367h1v2h-1zM133,368h1v1h-1zM134,367h1v1h-1zM135,365h1v2h-1zM136,366h1v3h-1zM137,367h1v1h-1zM138,366h1v1h-1zM139,367h1v1h-1zM140,368h1v3h-1zM141,364h1v6h-1zM142,364h1v1h-1zM143,365h1v7h-1zM144,368h1v3h-1zM145,367h1v1h-1zM146,366h1v1h-1zM147,366h1v1h-1zM148,367h1v2h-1zM149,369h1v1h-1zM150,367h1v2h-1zM151,366h1v1h-1zM152,367h1v3h-1zM153,369h1v1h-1zM154,367h1v2h-1zM155,368h1v3h-1zM156,368h1v2h-1zM157,368h1v1h-1zM158,366h1v2h-1zM159,367h1v2h-1zM160,369h1v1h-1zM161,368h1v1h-1zM162,367h1v1h-1zM163,368h1v1h-1zM164,367h1v1h-1zM165,366h1v1h-1zM166,365h1v1h-1zM167,364h1v1h-1zM168,365h1v4h-1zM169,368h1v1h-1zM170,369h1v3h-1zM171,364h1v7h-1zM172,365h1v4h-1zM173,367h1v1h-1zM174,366h1v1h-1zM175,367h1v3h-1zM176,366h1v3h-1zM177,367h1v1h-1zM178,368h1v3h-1zM179,366h1v4h-1zM180,365h1v1h-1zM181,366h1v5h-1zM182,365h1v5h-1zM183,366h1v1h-1zM184,366h1v1h-1zM185,366h1v1h-1zM186,365h1v1h-1zM187,366h1v2h-1zM188,365h1v2h-1zM189,366h1v2h-1zM190,365h1v2h-1zM191,366h1v3h-1zM192,367h1v1h-1zM193,364h1v3h-1zM194,365h1v2h-1zM195,367h1v1h-1zM196,368h1v1h-1zM197,368h1v1h-1zM198,366h1v2h-1zM199,365h1v1h-1zM200,366h1v1h-1zM201,366h1v1h-1zM202,366h1v1h-1zM203,364h1v2h-1zM204,365h1v3h-1zM205,367h1v1h-1zM206,365h1v2h-1zM207,366h1v1h-1zM208,367h1v1h-1zM209,367h1v1h-1zM210,367h1v1h-1zM211,365h1v2h-1zM212,366h1v1h-1zM213,367h1v2h-1zM214,365h1v3h-1zM215,366h1v1h-1zM216,367h1v2h-1zM217,365h1v3h-1zM218,366h1v1h-1zM219,367h1v1h-1zM220,365h1v2h-1zM221,364h1v1h-1zM222,365h1v3h-1zM223,365h1v2h-1zM224,366h1v2h-1zM225,362h1v5h-1zM226,363h1v5h-1zM227,364h1v3h-1zM228,365h1v3h-1zM229,365h1v2h-1zM230,362h1v3h-1zM231,363h1v8h-1zM232,366h1v4h-1zM233,365h1v1h-1zM234,366h1v1h-1zM235,367h1v1h-1zM236,362h1v5h-1zM237,363h1v4h-1zM238,367h1v2h-1zM239,364h1v4h-1zM240,365h1v4h-1zM241,364h1v4h-1zM242,365h1v2h-1zM243,365h1v1h-1zM244,364h1v1h-1zM245,365h1v1h-1zM246,366h1v3h-1zM247,368h1v1h-1zM248,364h1v4h-1zM249,364h1v1h-1zM250,365h1v3h-1zM251,364h1v3h-1zM252,365h1v1h-1zM253,364h1v1h-1zM254,365h1v5h-1zM255,366h1v3h-1zM256,364h1v2h-1zM257,364h1v1h-1zM258,364h1v1h-1zM259,365h1v5h-1zM260,365h1v4h-1zM261,364h1v1h-1zM262,361h1v3h-1zM263,362h1v6h-1zM264,366h1v1h-1zM265,365h1v1h-1zM266,364h1v1h-1zM267,365h1v2h-1zM268,363h1v3h-1zM269,364h1v3h-1zM270,365h1v1h-1zM271,366h1v1h-1zM272,365h1v1h-1zM273,366h1v1h-1zM274,367h1v1h-1zM275,363h1v4h-1zM276,364h1v1h-1zM277,365h1v2h-1zM278,365h1v1h-1zM279,363h1v2h-1zM280,364h1v3h-1zM281,365h1v1h-1zM282,364h1v1h-1zM283,364h1v1h-1zM284,365h1v1h-1zM285,366h1v3h-1zM286,363h1v5h-1zM287,364h1v1h-1zM288,365h1v1h-1zM289,365h1v1h-1zM290,364h1v1h-1zM291,365h1v1h-1zM292,366h1v1h-1zM293,366h1v1h-1zM294,366h1v1h-1zM295,366h1v1h-1zM296,366h1v1h-1zM297,363h1v3h-1zM298,364h1v4h-1zM299,363h1v4h-1zM300,364h1v3h-1zM301,364h1v2h-1zM302,362h1v2h-1zM303,363h1v2h-1zM304,365h1v2h-1zM305,364h1v2h-1zM306,364h1v1h-1zM307,365h1v3h-1zM308,365h1v2h-1zM309,364h1v1h-1zM310,365h1v1h-1zM311,364h1v1h-1zM312,363h1v1h-1zM313,363h1v1h-1zM314,363h1v1h-1zM315,363h1v1h-1zM316,364h1v2h-1zM317,364h1v1h-1zM318,365h1v1h-1zM319,365h1v1h-1zM320,364h1v1h-1zM321,365h1v3h-1zM322,365h1v2h-1zM323,364h1v1h-1zM324,365h1v2h-1zM325,364h1v2h-1zM326,363h1v1h-1zM327,364h1v1h-1zM328,361h1v3h-1zM329,362h1v7h-1zM330,364h1v4h-1zM331,365h1v3h-1zM332,362h1v5h-1zM333,360h1v2h-1zM334,361h1v8h-1zM335,364h1v4h-1zM336,363h1v1h-1zM337,364h1v1h-1zM338,363h1v1h-1zM339,364h1v4h-1zM340,362h1v5h-1zM341,363h1v1h-1zM342,364h1v1h-1zM343,365h1v1h-1zM344,363h1v2h-1zM345,364h1v1h-1zM346,363h1v1h-1zM347,364h1v1h-1zM348,365h1v3h-1zM349,364h1v3h-1zM350,363h1v1h-1zM351,362h1v1h-1zM352,363h1v3h-1zM353,363h1v2h-1zM354,362h1v1h-1zM355,363h1v1h-1zM356,361h1v2h-1zM357,360h1v1h-1zM358,361h1v5h-1zM359,366h1v1h-1zM360,362h1v4h-1zM361,361h1v1h-1zM362,362h1v1h-1zM363,362h1v1h-1zM364,363h1v2h-1zM365,364h1v1h-1zM366,362h1v2h-1zM367,363h1v3h-1zM368,366h1v1h-1zM369,365h1v1h-1zM370,359h1v6h-1zM371,360h1v1h-1zM372,361h1v4h-1zM373,364h1v1h-1zM374,363h1v1h-1zM375,364h1v1h-1zM376,361h1v3h-1zM377,362h1v2h-1zM378,364h1v2h-1zM379,361h1v4h-1zM380,362h1v3h-1zM381,363h1v1h-1zM382,363h1v1h-1zM383,363h1v1h-1zM384,362h1v1h-1zM385,363h1v2h-1zM386,365h1v2h-1zM387,366h1v1h-1zM388,365h1v1h-1zM389,364h1v1h-1zM390,363h1v1h-1zM391,363h1v1h-1zM392,362h1v1h-1zM393,362h1v1h-1zM394,363h1v2h-1zM395,364h1v1h-1zM396,365h1v2h-1zM397,363h1v3h-1zM398,362h1v1h-1zM399,362h1v1h-1zM400,363h1v1h-1zM401,363h1v1h-1zM402,361h1v2h-1zM403,362h1v1h-1zM404,361h1v1h-1zM405,361h1v1h-1zM406,362h1v1h-1zM407,360h1v2h-1zM408,361h1v3h-1zM409,363h1v1h-1zM410,364h1v1h-1zM411,364h1v1h-1zM412,360h1v4h-1zM413,359h1v1h-1zM414,360h1v3h-1zM415,361h1v1h-1zM416,360h1v1h-1zM417,361h1v1h-1zM418,360h1v1h-1zM419,361h1v4h-1zM420,363h1v1h-1zM421,361h1v2h-1zM422,360h1v1h-1zM423,361h1v2h-1zM424,363h1v1h-1zM425,363h1v1h-1zM426,363h1v1h-1zM427,363h1v1h-1zM428,360h1v3h-1zM429,361h1v3h-1zM430,362h1v1h-1zM431,358h1v4h-1zM432,359h1v2h-1zM433,361h1v1h-1zM434,362h1v2h-1zM435,361h1v2h-1zM436,359h1v2h-1zM437,360h1v2h-1zM438,360h1v1h-1zM439,361h1v2h-1zM440,361h1v1h-1zM441,362h1v1h-1zM442,361h1v1h-1zM443,360h1v1h-1zM444,361h1v4h-1zM445,362h1v2h-1zM446,361h1v1h-1z" fill="#ff00ff"/>
<rect x="447" y="295" width="1" height="134" fill="#d4d4d4"/>
<text x="42" y="136" text-anchor="end" fill="#000" font-size="11">20</text>
<text x="42" y="163" text-anchor="end" fill="#000" font-size="11">16</text>
<text x="42" y="190" text-anchor="end" fill="#000" font-size="11">12</text>
<text x="42" y="216" text-anchor="end" fill="#000" font-size="11">8</text>
<text x="42" y="243" text-anchor="end" fill="#000" font-size="11">4</text>
<text x="471" y="136" text-anchor="start" fill="#000" font-size="11">16</text>
<text x="471" y="153" text-anchor="start" fill="#000" font-size="11">14</text>
<text x="471" y="170" text-anchor="start" fill="#000" font-size="11">12</text>
<text x="471" y="186" text-anchor="start" fill="#000" font-size="11">10</text>
<text x="471" y="203" text-anchor="start" fill="#000" font-size="11">8</text>
<text x="471" y="220" text-anchor="start" fill="#000" font-size="11">6</text>
<text x="471" y="236" text-anchor="start" fill="#000" font-size="11">4</text>
<text x="471" y="253" text-anchor="start" fill="#000" font-size="11">2</text>
<text x="42" y="298" text-anchor="end" fill="#000" font-size="11">10</text>
<text x="42" y="325" text-anchor="end" fill="#000" font-size="11">8</text>
<text x="42" y="352" text-anchor="end" fill="#000" font-size="11">6</text>
<text x="42" y="378" text-anchor="end" fill="#000" font-size="11">4</text>
<text x="42" y="405" text-anchor="end" fill="#000" font-size="11">2</text>
<text x="471" y="298" text-anchor="start" fill="#000" font-size="11">20</text>
<text x="471" y="325" text-anchor="start" fill="#000" font-size="11">16</text>
<text x="471" y="352" text-anchor="start" fill="#000" font-size="11">12</text>
<text x="471" y="378" text-anchor="start" fill="#000" font-size="11">8</text>
<text x="471" y="405" text-anchor="start" fill="#000" font-size="11">4</text>
<text x="50" y="280" text-anchor="middle" fill="#000" font-size="11">0.0</text>
<text x="50" y="442" text-anchor="middle" fill="#000" font-size="11">0.0</text>
<text x="96" y="280" text-anchor="middle" fill="#000" font-size="11">0.5</text>
<text x="96" y="442" text-anchor="middle" fill="#000" font-size="11">0.5</text>
<text x="142" y="280" text-anchor="middle" fill="#000" font-size="11">1.0</text>
<text x="142" y="442" text-anchor="middle" fill="#000" font-size="11">1.0</text>
<text x="189" y="280" text-anchor="middle" fill="#000" font-size="11">1.5</text>
<text x="189" y="442" text-anchor="middle" fill="#000" font-size="11">1.5</text>
<text x="235" y="280" text-anchor="middle" fill="#000" font-size="11">2.0</text>
<text x="235" y="442" text-anchor="middle" fill="#000" font-size="11">2.0</text>
<text x="282" y="280" text-anchor="middle" fill="#000" font-size="11">2.5</text>
<text x="282" y="442" text-anchor="middle" fill="#000" font-size="11">2.5</text>
<text x="328" y="280" text-anchor="middle" fill="#000" font-size="11">3.0</text>
<text x="328" y="442" text-anchor="middle" fill="#000" font-size="11">3.0</text>
<text x="375" y="280" text-anchor="middle" fill="#000" font-size="11">3.5</text>
<text x="375" y="442" text-anchor="middle" fill="#000" font-size="11">3.5</text>
<text x="421" y="280" text-anchor="middle" fill="#000" font-size="11">4.0</text>
<text x="421" y="442" text-anchor="middle" fill="#000" font-size="11">4.0</text>
<text x="468" y="280" text-anchor="middle" fill="#000" font-size="11">4.5</text>
<text x="468" y="442" text-anchor="middle" fill="#000" font-size="11">4.5</text>
</svg>
<div class="a grp" style="left:491px;top:126px;width:139px;height:83px"></div><div class="a leg" style="left:498px;top:122px">Инф. о диске</div>
<div class="a " style="left:503px;top:136px">Тип:</div>
<div class="a v" style="left:542px;top:136px">DVD+R</div>
<div class="a " style="left:503px;top:153px">ID:</div>
<div class="a v" style="left:542px;top:153px">MCC 004</div>
<div class="a " style="left:503px;top:171px">Дата:</div>
<div class="a v" style="left:542px;top:171px">5 October 2005</div>
<div class="a " style="left:503px;top:189px">Метка:</div>
<div class="a v" style="left:542px;top:189px">2D_Video_BSE</div>
<div class="a grp" style="left:491px;top:217px;width:139px;height:204px"></div><div class="a leg" style="left:497px;top:213px"><span style="letter-spacing:0.6px">Установки</span></div>
<div class="a " style="left:500px;top:227px">Скорость</div>
<div class="a sunk" style="left:500px;top:242px;width:84px;height:21px"><div class="a" style="left:4px;top:4px">8 X</div><div class="a btn2" style="right:1px;top:1px;width:16px;height:17px;background:#d4d0c8"><svg class="a" style="left:3px;top:5px" width="7" height="4" viewBox="0 0 7 4" shape-rendering="crispEdges"><path d="M0 0h7v1h-1v1h-1v1h-1v1h-1v-1h-1v-1h-1v-1h-1z" fill="#000"/></svg></div></div>
<div class="a btn" style="left:592px;top:240px;width:23px;height:23px"><div class="a" style="left:3px;top:2px;width:15px;height:16px;background:#fff;border:1px solid #000"></div><svg class="a" style="left:4px;top:3px" width="11" height="14" viewBox="598 244 11 14" shape-rendering="crispEdges"><path d="M599 251v-3h1v-1h3v-2h1v1h1v1h1v1h-1v1h-1v1h-1v-2h-3v3z M607 251v3h-1v1h-3v2h-1v-1h-1v-1h-1v-1h1v-1h1v-1h1v2h3v-3z" fill="#008000"/></svg></div>
<div class="a " style="left:502px;top:273px">Старт</div>
<div class="a sunk" style="left:554px;top:268px;width:60px;height:20px"><div class="a" style="left:3px;top:3px;letter-spacing:-0.3px">0000 MB</div></div>
<div class="a " style="left:502px;top:295px">Конец</div>
<div class="a sunk" style="left:554px;top:291px;width:60px;height:20px"><div class="a" style="left:3px;top:3px;letter-spacing:-0.3px">4402 MB</div></div>
<div class="a sunk cb" style="left:502px;top:316px;background:#fff"></div><div class="a " style="left:520.5px;top:317px;letter-spacing:0.2px">Быстр.скан.</div>
<div class="a sunk cb" style="left:502px;top:337px;background:#fff"><svg class="a" style="left:1px;top:1px" width="9" height="9" viewBox="0 0 9 9" shape-rendering="crispEdges"><path d="M1 3v3l2 2l5-5v-3l-5 5z" fill="#000"/></svg></div><div class="a " style="left:520.5px;top:338px;letter-spacing:-0.15px">Отобр. C1/PIE</div>
<div class="a sunk cb" style="left:502px;top:353px;background:#fff"><svg class="a" style="left:1px;top:1px" width="9" height="9" viewBox="0 0 9 9" shape-rendering="crispEdges"><path d="M1 3v3l2 2l5-5v-3l-5 5z" fill="#000"/></svg></div><div class="a " style="left:520.5px;top:354px;letter-spacing:-0.15px">Отобр. C2/PIF</div>
<div class="a sunk cb" style="left:502px;top:370px;background:#fff"><svg class="a" style="left:1px;top:1px" width="9" height="9" viewBox="0 0 9 9" shape-rendering="crispEdges"><path d="M1 3v3l2 2l5-5v-3l-5 5z" fill="#000"/></svg></div><div class="a " style="left:520.5px;top:371px;letter-spacing:-0.15px">Отобр. Jitter</div>
<div class="a sunk cb" style="left:502px;top:386px;background:#fff"><svg class="a" style="left:1px;top:1px" width="9" height="9" viewBox="0 0 9 9" shape-rendering="crispEdges"><path d="M1 3v3l2 2l5-5v-3l-5 5z" fill="#000"/></svg></div><div class="a " style="left:520.5px;top:387px;letter-spacing:-0.02px">Отобр. скор. чтения</div>
<div class="a sunk cb" style="left:502px;top:402px;background:#d4d0c8"><svg class="a" style="left:1px;top:1px" width="9" height="9" viewBox="0 0 9 9" shape-rendering="crispEdges"><path d="M1 3v3l2 2l5-5v-3l-5 5z" fill="#808080"/></svg></div><div class="a " style="left:521px;top:403px;color:#808080;text-shadow:1px 1px 0 #fff;letter-spacing:-0.12px">Отобр. скор. записи</div>
<div class="a grp" style="left:491px;top:427px;width:139px;height:26px"></div>
<div class="a " style="left:502px;top:435px">Индекс</div>
<div class="a v r" style="left:560px;top:435px;width:61px">97</div>
<div class="a grp" style="left:491px;top:459px;width:139px;height:56px"></div>
<div class="a " style="left:502px;top:469px">Выполнено:</div>
<div class="a v r" style="left:560px;top:469px;width:61px">100 %</div>
<div class="a " style="left:502px;top:485px">Положение:</div>
<div class="a v r" style="left:560px;top:485px;width:61px">4401 MB</div>
<div class="a " style="left:502px;top:500px">Скорость:</div>
<div class="a v r" style="left:560px;top:500px;width:61px">8.22 X</div>
<div class="a grp" style="left:14px;top:460px;width:146px;height:55px"></div>
<div class="a leg" style="left:21px;top:454px;padding-left:13.5px;letter-spacing:-0.15px">PI Errors</div>
<div class="a " style="left:24px;top:456px;width:9px;height:9px;background:#00ffff;border:1px solid #000"></div>
<div class="a " style="left:22px;top:470px">Среднее:</div>
<div class="a v r" style="left:90px;top:470px;width:61px">1.95</div>
<div class="a " style="left:22px;top:485px">Максим.:</div>
<div class="a v r" style="left:90px;top:485px;width:61px">14</div>
<div class="a " style="left:22px;top:500px">Итого:</div>
<div class="a v r" style="left:90px;top:500px;width:61px">15717</div>
<div class="a grp" style="left:172px;top:460px;width:146px;height:55px"></div>
<div class="a leg" style="left:179px;top:454px;padding-left:13.5px;letter-spacing:-0.15px">PI Failures</div>
<div class="a " style="left:182px;top:456px;width:9px;height:9px;background:#ffff00;border:1px solid #000"></div>
<div class="a " style="left:181px;top:470px">Среднее:</div>
<div class="a v r" style="left:250px;top:470px;width:61px">0.02</div>
<div class="a " style="left:181px;top:485px">Максим.:</div>
<div class="a v r" style="left:250px;top:485px;width:61px">6</div>
<div class="a " style="left:181px;top:500px">Итого:</div>
<div class="a v r" style="left:250px;top:500px;width:61px">221</div>
<div class="a grp" style="left:331px;top:460px;width:147px;height:41px"></div>
<div class="a leg" style="left:338px;top:454px;padding-left:13.5px;letter-spacing:-0.15px">Jitter</div>
<div class="a " style="left:341px;top:456px;width:9px;height:9px;background:#ff00ff;border:1px solid #000"></div>
<div class="a " style="left:340px;top:470px">Среднее:</div>
<div class="a v r" style="left:408px;top:470px;width:61px">9.36 %</div>
<div class="a " style="left:340px;top:485px">Максим.:</div>
<div class="a v r" style="left:408px;top:485px;width:61px">10.4 %</div>
<div class="a " style="left:340px;top:503px">Сбои PO:</div>
<div class="a v r" style="left:408px;top:503px;width:61px">0</div>
</div></body></html>
